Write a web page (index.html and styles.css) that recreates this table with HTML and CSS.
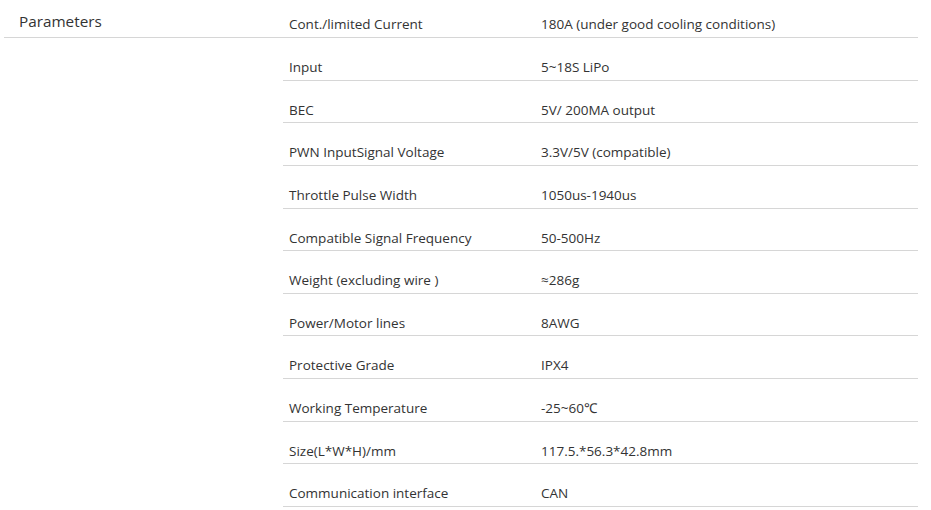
FILE: index.html
```html
<!DOCTYPE html>
<html>
<head>
<meta charset="utf-8">
<link rel="stylesheet" href="styles.css">
</head>
<body>
<div class="specs">
  <div class="head-row">
    <div class="title">Parameters</div>
    <div class="cell label">Cont./limited Current</div>
    <div class="cell value">180A (under good cooling conditions)</div>
  </div>
  <div class="rows">
    <div class="row"><div class="cell label">Input</div><div class="cell value">5~18S LiPo</div></div>
    <div class="row"><div class="cell label">BEC</div><div class="cell value">5V/ 200MA output</div></div>
    <div class="row"><div class="cell label">PWN InputSignal Voltage</div><div class="cell value">3.3V/5V (compatible)</div></div>
    <div class="row"><div class="cell label">Throttle Pulse Width</div><div class="cell value">1050us-1940us</div></div>
    <div class="row"><div class="cell label">Compatible Signal Frequency</div><div class="cell value">50-500Hz</div></div>
    <div class="row"><div class="cell label">Weight (excluding wire )</div><div class="cell value">≈286g</div></div>
    <div class="row"><div class="cell label">Power/Motor lines</div><div class="cell value">8AWG</div></div>
    <div class="row"><div class="cell label">Protective Grade</div><div class="cell value">IPX4</div></div>
    <div class="row"><div class="cell label">Working Temperature</div><div class="cell value">-25~60℃</div></div>
    <div class="row"><div class="cell label">Size(L*W*H)/mm</div><div class="cell value">117.5.*56.3*42.8mm</div></div>
    <div class="row"><div class="cell label">Communication interface</div><div class="cell value">CAN</div></div>
  </div>
</div>
</body>
</html>
```
FILE: styles.css
```css
html, body {
  margin: 0;
  padding: 0;
  background: #fff;
}
body {
  font-family: "Open Sans", "Noto Sans", sans-serif;
  color: #333;
}
.specs {
  width: 914px;
  margin-left: 4px;
}
.head-row {
  display: grid;
  grid-template-columns: 279px 252px 1fr;
  height: 38px;
  border-bottom: 1px solid #d6d6d6;
  box-sizing: border-box;
}
.title {
  font-size: 15.3px;
  padding-left: 15px;
  padding-top: 10px;
  line-height: 22px;
}
.head-row .cell {
  padding-top: 15px;
}
.rows {
  margin-left: 279px;
}
.row {
  display: grid;
  grid-template-columns: 252px 1fr;
  height: 42.64px;
  box-sizing: border-box;
  border-bottom: 1px solid #d6d6d6;
  padding-top: 20px;
}
.cell {
  font-size: 13.5px;
  line-height: 18px;
  padding-left: 6px;
}
```
